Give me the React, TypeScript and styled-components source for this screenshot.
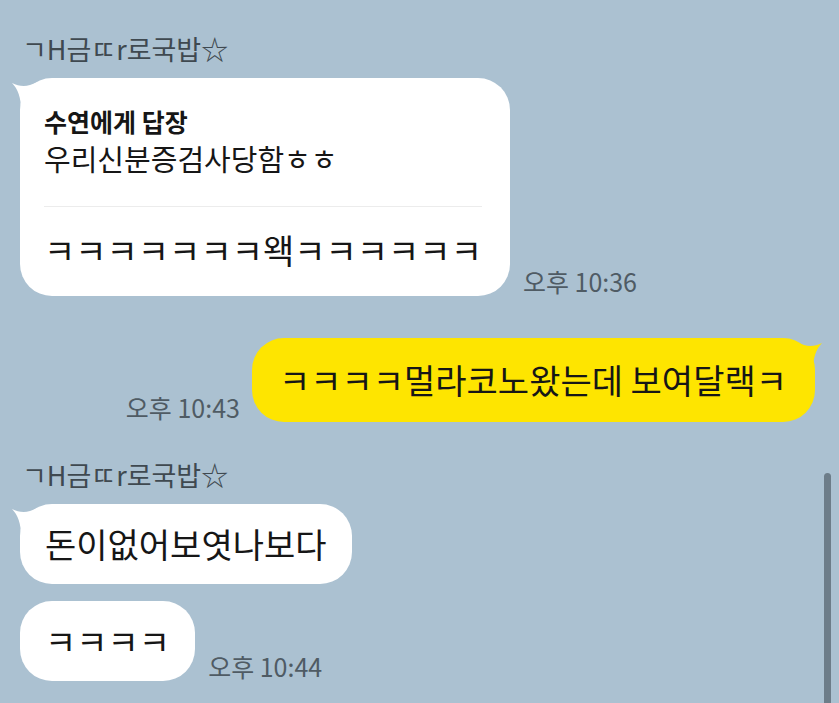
import styled, { createGlobalStyle } from "styled-components";

const GlobalStyle = createGlobalStyle`
  html, body {
    margin: 0;
    padding: 0;
    background: #abc1d1;
  }
  body {
    font-family: "Noto Sans CJK KR", "Noto Sans", sans-serif;
  }
`;

const Screen = styled.div`
  position: relative;
  width: 839px;
  height: 703px;
  overflow: hidden;
  background: #abc1d1;
  display: flex;
  flex-direction: column;
  padding-top: 33px;
  box-sizing: border-box;
`;

const Name = styled.div<{ gap?: number }>`
  margin: ${(p) => p.gap ?? 0}px 0 13px 22px;
  font-size: 27px;
  line-height: 32px;
  color: #3f4950;
`;

const Row = styled.div<{ mine?: boolean; gap?: number }>`
  display: flex;
  align-items: flex-end;
  flex-direction: ${(p) => (p.mine ? "row-reverse" : "row")};
  gap: ${(p) => (p.mine ? 12 : 13)}px;
  margin-top: ${(p) => p.gap ?? 0}px;
  padding: ${(p) => (p.mine ? "0 24px 0 0" : "0 0 0 20px")};
`;

const Bubble = styled.div<{ mine?: boolean }>`
  position: relative;
  background: ${(p) => (p.mine ? "#fee500" : "#ffffff")};
  color: #161616;
  border-radius: 32px;
  padding: ${(p) => (p.mine ? "22px 28px 22px 27px" : "20px 25px 20px 25px")};
  font-size: 34px;
  line-height: 40px;
  white-space: nowrap;
`;

const Tail = styled.svg<{ mine?: boolean }>`
  position: absolute;
  top: 2px;
  width: 26px;
  height: 30px;
  ${(p) => (p.mine ? "right: -7px; transform: scaleX(-1);" : "left: -8px;")}
`;

const ReplyBubble = styled(Bubble)`
  padding: 28px 28px 28px 24px;
`;

const ReplyTitle = styled.div`
  font-size: 25px;
  line-height: 30px;
  font-weight: 700;
`;

const ReplyBody = styled.div`
  margin-top: 5px;
  font-size: 29px;
  line-height: 34px;
`;

const Divider = styled.div`
  height: 1px;
  background: #ececec;
  margin: 31px 0 25px;
`;

const ReplyText = styled.div`
  line-height: 36px;
`;

const Time = styled.div`
  font-size: 25px;
  line-height: 28px;
  color: #4f5b64;
  white-space: nowrap;
  padding-bottom: 1px;
`;

const Scrollbar = styled.div`
  position: absolute;
  right: 8px;
  top: 473px;
  width: 7px;
  height: 240px;
  border-radius: 4px;
  background: #6d7d89;
`;

function BubbleTail({ mine }: { mine?: boolean }) {
  return (
    <Tail mine={mine} viewBox="0 0 26 30">
      <path
        d="M0 3 C6 6 12 7 18 5 L26 2 L26 30 L9 30 C9 18 6 9 0 3 Z"
        fill={mine ? "#fee500" : "#ffffff"}
      />
    </Tail>
  );
}

export default function App() {
  return (
    <>
      <GlobalStyle />
      <Screen>
        <Name>ㄱH금ㄸr로국밥☆</Name>
        <Row>
          <ReplyBubble>
            <BubbleTail />
            <ReplyTitle>수연에게 답장</ReplyTitle>
            <ReplyBody>우리신분증검사당함ㅎㅎ</ReplyBody>
            <Divider />
            <ReplyText>ㅋㅋㅋㅋㅋㅋㅋ왝ㅋㅋㅋㅋㅋㅋ</ReplyText>
          </ReplyBubble>
          <Time>오후 10:36</Time>
        </Row>

        <Row mine gap={42}>
          <Bubble mine>
            <BubbleTail mine />
            ㅋㅋㅋㅋ멀라코노왔는데 보여달랙ㅋ
          </Bubble>
          <Time>오후 10:43</Time>
        </Row>

        <Name gap={37}>ㄱH금ㄸr로국밥☆</Name>
        <Row>
          <Bubble>
            <BubbleTail />
            돈이없어보엿나보다
          </Bubble>
        </Row>
        <Row gap={17}>
          <Bubble>ㅋㅋㅋㅋ</Bubble>
          <Time>오후 10:44</Time>
        </Row>
        <Scrollbar />
      </Screen>
    </>
  );
}
